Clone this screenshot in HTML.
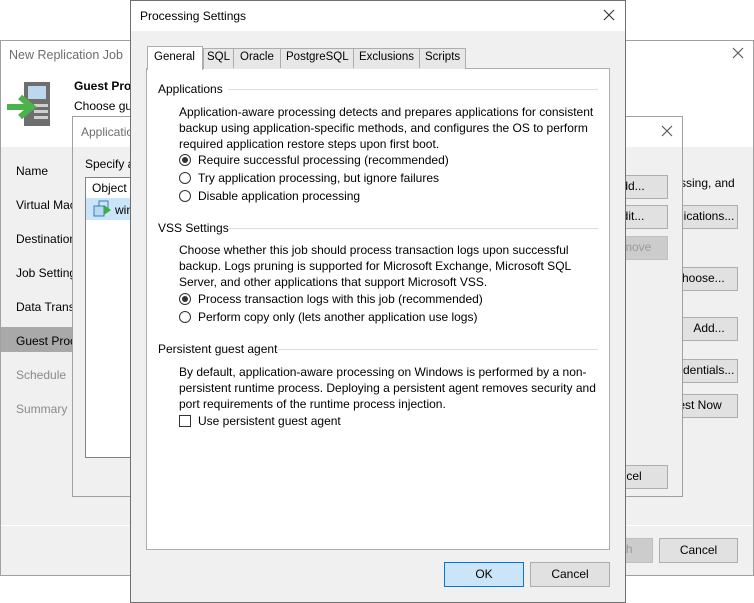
<!DOCTYPE html>
<html><head><meta charset="utf-8"><style>
*{margin:0;padding:0;box-sizing:border-box}
body{width:754px;height:603px;overflow:hidden;background:#fff;font-family:"Liberation Sans",sans-serif;font-size:12px;color:#000;position:relative}
.a{position:absolute}
.btn{position:absolute;background:#e1e1e1;border:1px solid #adadad;text-align:center;line-height:21px;font-size:12px;overflow:hidden;white-space:nowrap}
.t{position:absolute;white-space:nowrap;font-size:12px}
.grp{position:absolute;height:1px;background:#dcdcdc}
.rad{position:absolute;width:12px;height:12px;border:1px solid #333;border-radius:50%;background:#fff}
.rad.on::after{content:"";position:absolute;left:2px;top:2px;width:6px;height:6px;border-radius:50%;background:#333}
.tab{position:absolute;top:51px;font-size:11.5px;white-space:nowrap}
</style></head><body>

<!-- outer window -->
<div class="a" style="left:0;top:40px;width:754px;height:536px;border:1px solid #a0a0a0;background:#f0f0f0"></div>
<div class="a" style="left:1px;top:41px;width:752px;height:106px;background:#fff"></div>
<div class="t" style="left:9px;top:48px;color:#6d6d6d;font-size:12.5px">New Replication Job</div>
<svg class="a" style="left:732px;top:47px" width="12" height="12"><path d="M1 1L11 11M11 1L1 11" stroke="#555" stroke-width="1.1"/></svg>
<svg class="a" style="left:6px;top:80px" width="46" height="50">
<rect x="18" y="2" width="26" height="44" fill="#6e6e6e"/>
<rect x="22" y="6" width="18" height="13" fill="#bdd7ee"/>
<rect x="28" y="24" width="14" height="3" fill="#d0d0d0"/><rect x="28" y="30" width="14" height="3" fill="#d0d0d0"/><rect x="28" y="36" width="14" height="3" fill="#d0d0d0"/>
<path d="M1 27 H22 M14 17 L26 27 L14 37" stroke="#4cb34c" stroke-width="6" fill="none"/>
</svg>
<div class="t" style="left:74px;top:79px;font-weight:bold">Guest Processing</div>
<div class="t" style="left:74px;top:99px">Choose guest OS processing options</div>
<div class="t" style="left:16px;top:164px">Name</div>
<div class="t" style="left:16px;top:198px">Virtual Machines</div>
<div class="t" style="left:16px;top:232px">Destination</div>
<div class="t" style="left:16px;top:266px">Job Settings</div>
<div class="t" style="left:16px;top:300px">Data Transfer</div>
<div class="a" style="left:1px;top:327px;width:71px;height:25px;background:#a9a9a9"></div>
<div class="t" style="left:16px;top:334px">Guest Processing</div>
<div class="t" style="left:16px;top:368px;color:#8a8a8a">Schedule</div>
<div class="t" style="left:16px;top:402px;color:#8a8a8a">Summary</div>
<div class="a" style="left:1px;top:525px;width:752px;height:1px;background:#fff"></div>
<div class="t" style="left:650px;top:176px">processing, and</div>
<div class="btn" style="left:680px;top:205px;width:58px;height:24px;text-indent:-24px">Applications...</div>
<div class="btn" style="left:680px;top:267px;width:58px;height:24px;text-indent:-20px">Choose...</div>
<div class="btn" style="left:680px;top:317px;width:58px;height:24px">Add...</div>
<div class="btn" style="left:680px;top:359px;width:58px;height:24px;text-indent:-20px">Credentials...</div>
<div class="btn" style="left:680px;top:394px;width:58px;height:24px;text-indent:-24px">Test Now</div>
<div class="btn" style="left:580px;top:538px;width:73px;height:25px;background:#ccc;border-color:#bfbfbf;color:#999">Finish</div>
<div class="btn" style="left:659px;top:538px;width:79px;height:25px;line-height:23px">Cancel</div>

<!-- application dialog -->
<div class="a" style="left:72px;top:116px;width:611px;height:381px;border:1px solid #a0a0a0;background:#f0f0f0"></div>
<div class="a" style="left:73px;top:117px;width:609px;height:30px;background:#fff"></div>
<div class="t" style="left:81px;top:125px;color:#6d6d6d">Application Processing</div>
<svg class="a" style="left:661px;top:125px" width="12" height="12"><path d="M1 1L11 11M11 1L1 11" stroke="#555" stroke-width="1.1"/></svg>
<div class="t" style="left:85px;top:157px">Specify application</div>
<div class="a" style="left:85px;top:177px;width:100px;height:281px;border:1px solid #828282;background:#fff"></div>
<div class="t" style="left:92px;top:181px">Object</div>
<div class="a" style="left:86px;top:198px;width:60px;height:22px;background:#cce4f7"></div>
<svg class="a" style="left:93px;top:200px" width="20" height="18"><rect x="6" y="1" width="9" height="8" fill="none" stroke="#2f7fc0"/><rect x="1" y="6" width="10" height="10" fill="#bdd7ee" stroke="#2f7fc0"/><path d="M11 5 L18 10 L11 15Z" fill="#3cae3c"/></svg>
<div class="t" style="left:115px;top:203px">win</div>
<div class="btn" style="left:590px;top:175px;width:78px;height:24px">Add...</div>
<div class="btn" style="left:590px;top:205px;width:78px;height:24px">Edit...</div>
<div class="btn" style="left:590px;top:236px;width:78px;height:24px;background:#ccc;border-color:#bfbfbf;color:#999">Remove</div>
<div class="btn" style="left:590px;top:465px;width:78px;height:24px;text-indent:-12px">Cancel</div>

<!-- processing settings dialog -->
<div class="a" style="left:130px;top:0;width:496px;height:603px;border:1px solid #707070;background:#f0f0f0"></div>
<div class="a" style="left:131px;top:1px;width:494px;height:30px;background:#fff"></div>
<div class="t" style="left:140px;top:9px">Processing Settings</div>
<svg class="a" style="left:603px;top:9px" width="12" height="12"><path d="M1 1L11 11M11 1L1 11" stroke="#333" stroke-width="1.1"/></svg>
<div class="a" style="left:146px;top:68px;width:464px;height:482px;border:1px solid #adadad;background:#fff"></div>
<div class="a" style="left:203px;top:48px;width:263px;height:21px;border:1px solid #adadad;border-bottom:none;background:#e7e7e7"></div>
<div class="a" style="left:233px;top:48px;width:1px;height:20px;background:#adadad"></div>
<div class="a" style="left:280px;top:48px;width:1px;height:20px;background:#adadad"></div>
<div class="a" style="left:353px;top:48px;width:1px;height:20px;background:#adadad"></div>
<div class="a" style="left:419px;top:48px;width:1px;height:20px;background:#adadad"></div>
<div class="a" style="left:147px;top:46px;width:56px;height:24px;border:1px solid #adadad;border-bottom:none;background:#fff"></div>
<div class="tab" style="left:154px">General</div>
<div class="tab" style="left:207px">SQL</div>
<div class="tab" style="left:240px">Oracle</div>
<div class="tab" style="left:286px">PostgreSQL</div>
<div class="tab" style="left:359px">Exclusions</div>
<div class="tab" style="left:425px">Scripts</div>

<div class="t" style="left:158px;top:82px">Applications</div>
<div class="grp" style="left:228px;top:89px;width:370px"></div>
<div class="t" style="left:179px;top:104px;line-height:16px">Application-aware processing detects and prepares applications for consistent<br>backup using application-specific methods, and configures the OS to perform<br>required application restore steps upon first boot.</div>
<div class="rad on" style="left:179px;top:154px"></div><div class="t" style="left:198px;top:153px">Require successful processing (recommended)</div>
<div class="rad" style="left:179px;top:172px"></div><div class="t" style="left:198px;top:171px">Try application processing, but ignore failures</div>
<div class="rad" style="left:179px;top:190px"></div><div class="t" style="left:198px;top:189px">Disable application processing</div>

<div class="t" style="left:158px;top:221px">VSS Settings</div>
<div class="grp" style="left:229px;top:228px;width:369px"></div>
<div class="t" style="left:179px;top:242px;line-height:16px">Choose whether this job should process transaction logs upon successful<br>backup. Logs pruning is supported for Microsoft Exchange, Microsoft SQL<br>Server, and other applications that support Microsoft VSS.</div>
<div class="rad on" style="left:179px;top:293px"></div><div class="t" style="left:198px;top:292px">Process transaction logs with this job (recommended)</div>
<div class="rad" style="left:179px;top:311px"></div><div class="t" style="left:198px;top:310px">Perform copy only (lets another application use logs)</div>

<div class="t" style="left:158px;top:342px">Persistent guest agent</div>
<div class="grp" style="left:278px;top:349px;width:320px"></div>
<div class="t" style="left:179px;top:364px;line-height:16px">By default, application-aware processing on Windows is performed by a non-<br>persistent runtime process. Deploying a persistent agent removes security and<br>port requirements of the runtime process injection.</div>
<div class="a" style="left:179px;top:415px;width:12px;height:12px;border:1px solid #333;background:#fff"></div>
<div class="t" style="left:198px;top:414px">Use persistent guest agent</div>

<div class="btn" style="left:444px;top:562px;width:80px;height:25px;line-height:23px;background:#cce4f7;border-color:#0078d7">OK</div>
<div class="btn" style="left:530px;top:562px;width:80px;height:25px;line-height:23px">Cancel</div>
</body></html>
